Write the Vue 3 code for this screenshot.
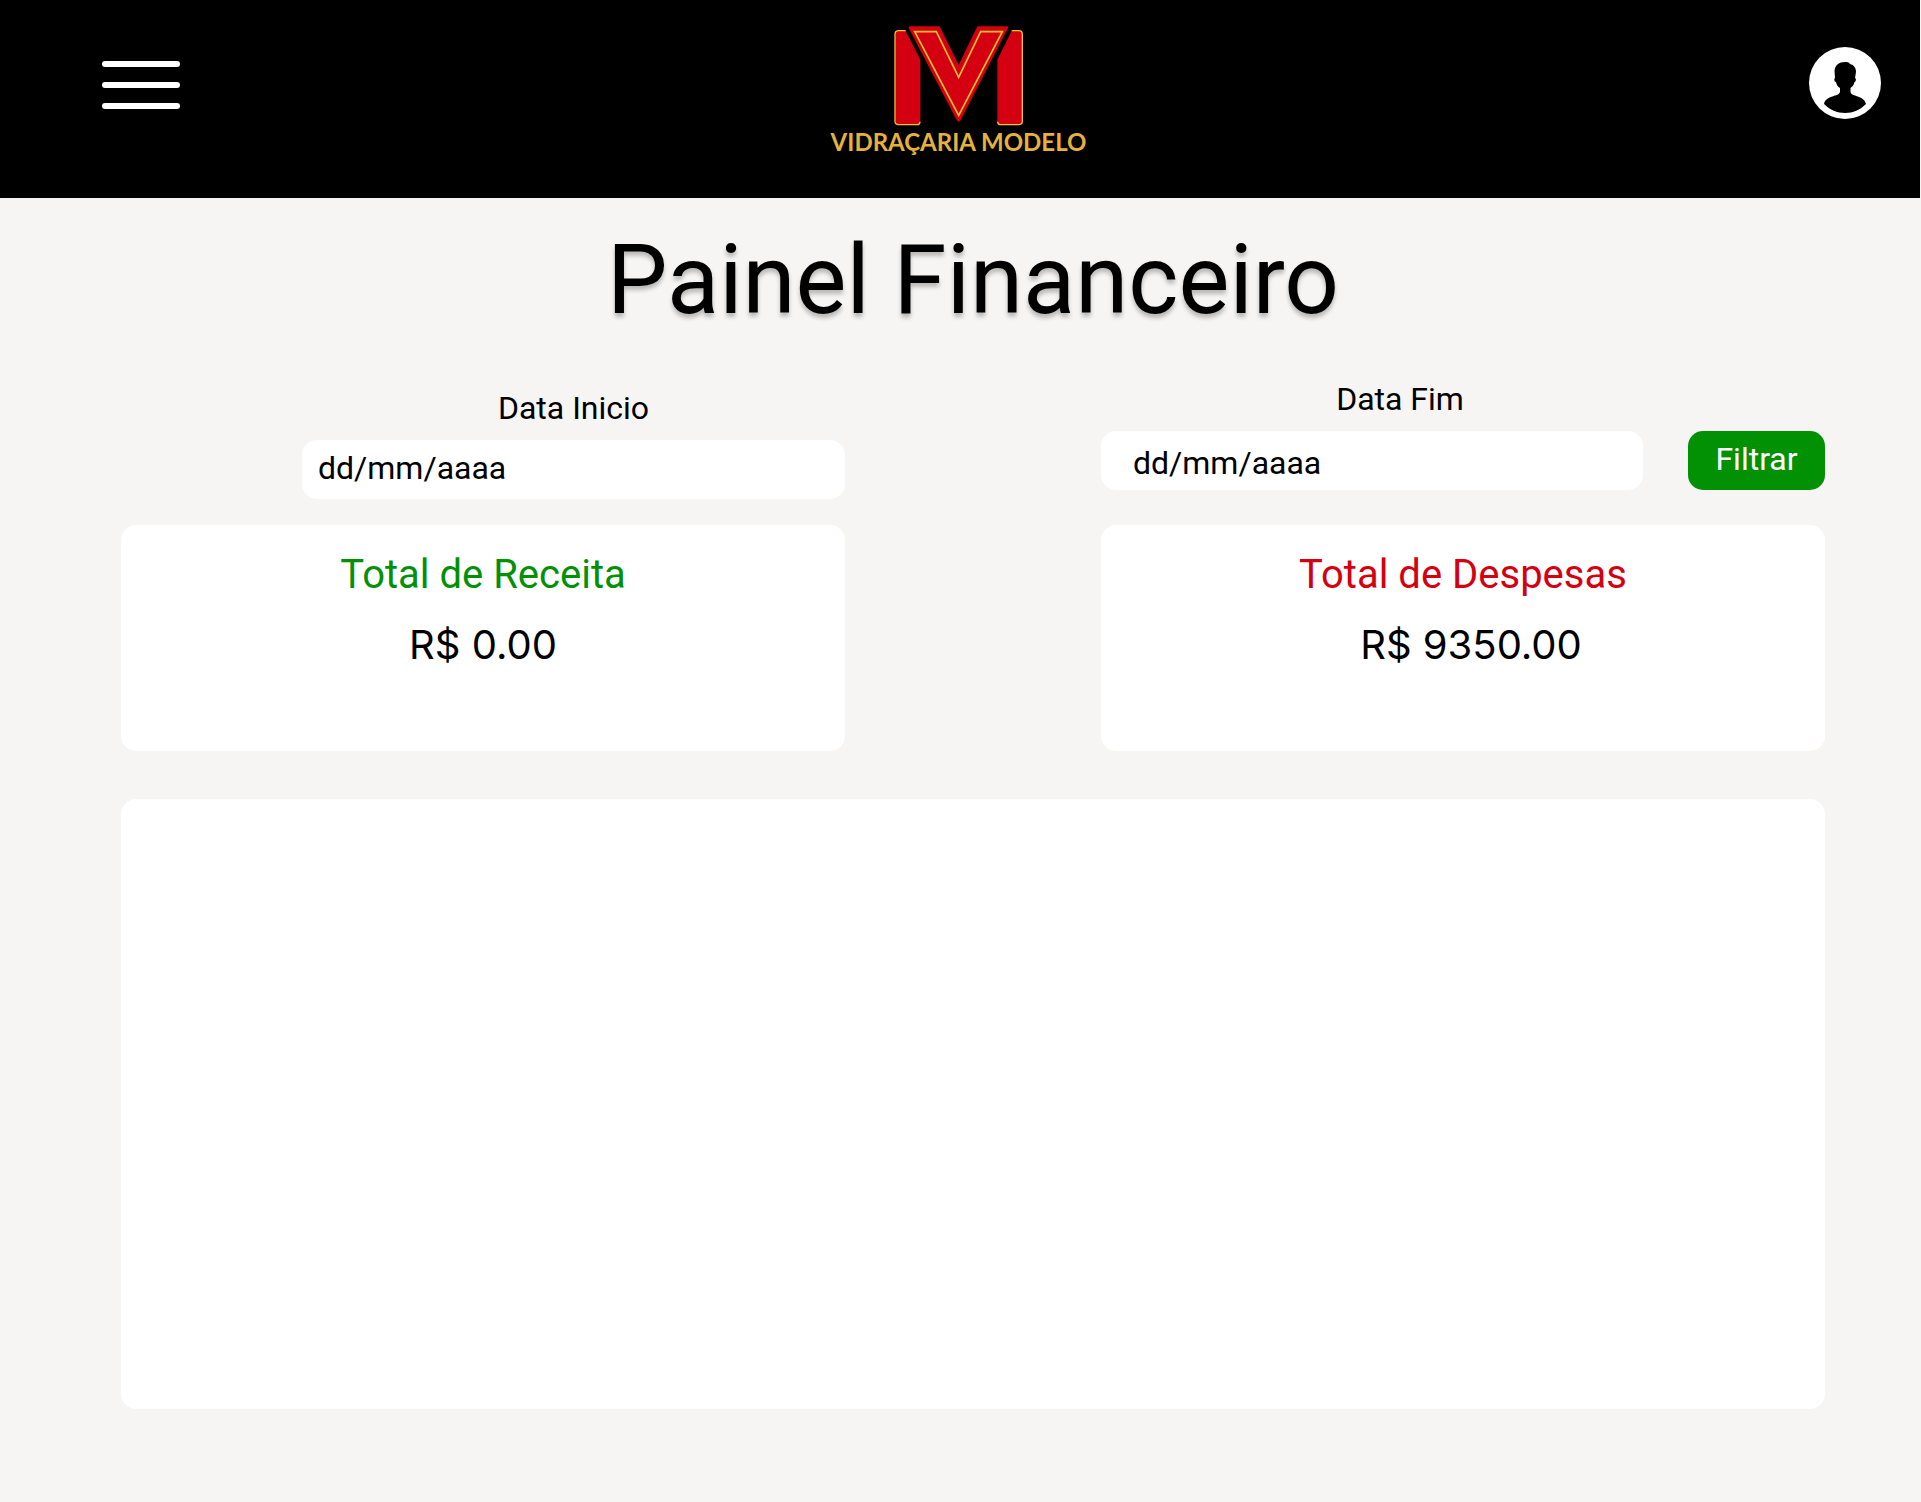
<script setup>
import { ref } from 'vue'

const startDate = ref('')
const endDate = ref('')
const income = ref(0)
const expenses = ref(9350)

const money = (value) => `R$ ${value.toFixed(2)}`
</script>

<template>
  <div class="page">
    <header class="topbar">
      <button class="menu" type="button" aria-label="Menu">
        <span class="bar"></span>
        <span class="bar"></span>
        <span class="bar"></span>
      </button>

      <a class="brand" href="#">
        <svg class="mark" viewBox="222 47 387 300" aria-hidden="true">
          <g fill="#d40011">
            <path d="M257 62H236Q226 62 226 72V332Q226 342 236 342H291Q301 342 301 332V148Z" />
            <path d="M575 62H597Q607 62 607 72V332Q607 342 597 342H542Q532 342 532 332V148Z" />
            <path d="M270 48H355Q359 48 361 52L416 164L470 52Q472 48 476 48H561Q566 48 564 53L422 329Q416 340 410 329L266 53Q264 48 270 48Z" />
          </g>
          <g fill="none" stroke="#efc12f" stroke-width="4">
            <path d="M257 61H236Q225 61 225 72V333Q225 343 236 343H291Q300 343 300 334" />
            <path d="M575 61H596Q607 61 607 72V333Q607 343 596 343H542Q533 343 533 334" />
            <path stroke-width="5" d="M284 64H349L416 201L482 64H547L416 315Z" />
          </g>
        </svg>
        <span class="name">VIDRAÇARIA MODELO</span>
      </a>

      <button class="profile" type="button" aria-label="Perfil">
        <svg viewBox="0 0 72 72" width="72" height="72" aria-hidden="true">
          <circle cx="36" cy="36" r="36" fill="#fff" />
          <path
            d="M36 15C38 15 40 15 41 17C45 18 47 21 47 25L46 31C47.500 31 47 35 45.500 35C45 38 43 40 41.500 41V45C42 50 55 48 57 57C51 63 44 66 36 66C28 66 21 63 15 57C17 48 30 50 31 45V41C29 40 27.500 38 27 35C25 35 25 31 26 31L25.500 24C26 18 30 15 36 15Z"
            fill="#000"
          />
        </svg>
      </button>
    </header>

    <main class="content">
      <h1 class="title">Painel Financeiro</h1>

      <form class="columns" @submit.prevent>
        <div class="field start">
          <label for="start-date">Data Inicio</label>
          <input id="start-date" v-model="startDate" type="text" placeholder="dd/mm/aaaa" />
        </div>
        <div class="end-group">
          <div class="field end">
            <label for="end-date">Data Fim</label>
            <input id="end-date" v-model="endDate" type="text" placeholder="dd/mm/aaaa" />
          </div>
          <button class="filter" type="submit">Filtrar</button>
        </div>
      </form>

      <section class="columns totals">
        <article class="card">
          <h2 class="income">Total de Receita</h2>
          <p>{{ money(income) }}</p>
        </article>
        <article class="card expense-card">
          <h2 class="expense">Total de Despesas</h2>
          <p>{{ money(expenses) }}</p>
        </article>
      </section>

      <section class="chart"></section>
    </main>
  </div>
</template>

<style>
body {
  background: #f6f5f4;
}
</style>

<style scoped>
.page {
  color: #000;
  font-family: Roboto, "Liberation Sans", sans-serif;
}

.topbar {
  display: grid;
  grid-template-columns: 1fr auto 1fr;
  align-items: start;
  box-sizing: border-box;
  min-height: 198px;
  margin-right: 1px;
  padding: 26px 39px 24px 102px;
  background: #000;
}

.menu,
.profile {
  padding: 0;
  border: 0;
  background: none;
  cursor: pointer;
}

.menu {
  display: flex;
  flex-direction: column;
  gap: 15px;
  width: 78px;
  margin-top: 35px;
}

.bar {
  width: 100%;
  height: 6px;
  border-radius: 3px;
  background: #fff;
}

.brand {
  display: flex;
  flex-direction: column;
  align-items: center;
  margin-right: 66px;
  color: #e5b23c;
  text-decoration: none;
}

.mark {
  width: 129px;
  height: 100px;
}

.name {
  font: 700 24px/32px Lato, sans-serif;
  white-space: nowrap;
}

.profile {
  display: flex;
  justify-self: end;
  margin-top: 21px;
}

.content {
  padding: 26px 96px 93px 121px;
}

.title {
  margin: 0 0 43px;
  font-size: 96px;
  font-weight: 400;
  line-height: 112px;
  text-align: center;
  text-shadow: 0 4px 4px rgba(0, 0, 0, 0.25);
}

.columns {
  display: grid;
  grid-template-columns: 1fr 1fr;
  column-gap: 256px;
  align-items: start;
}

.field {
  display: flex;
  flex-direction: column;
  gap: 12px;
  font-size: 32px;
  line-height: 40px;
  text-align: center;
}

.start {
  justify-self: end;
  width: 75%;
  padding-top: 9px;
}

.end-group {
  display: flex;
  align-items: flex-end;
  gap: 45px;
}

.end {
  flex: 1;
}

.end label {
  padding-left: 56px;
}

.field input {
  box-sizing: border-box;
  width: 100%;
  height: 59px;
  padding: 0 16px 4px;
  border: 0;
  border-radius: 15px;
  background: #fff;
  color: #000;
  font: inherit;
  text-align: left;
}

.end input {
  padding: 4px 32px 0;
}

.field input::placeholder {
  color: #000;
  opacity: 1;
}

.filter {
  width: 137px;
  height: 59px;
  padding: 0 0 4px;
  border: 0;
  border-radius: 15px;
  background: #029005;
  color: #fff;
  font: inherit;
  font-size: 32px;
  cursor: pointer;
}

.totals {
  margin: 26px 0 48px;
}

.card,
.chart {
  box-sizing: border-box;
  border-radius: 15px;
  background: #fff;
}

.card {
  min-height: 226px;
  padding: 26px 16px;
  text-align: center;
}

.card h2 {
  margin: 0 0 22px;
  font-size: 40px;
  font-weight: 400;
  line-height: 48px;
}

.card p {
  margin: 0;
  font-family: Inter, sans-serif;
  font-size: 40px;
  line-height: 48px;
}

.expense-card p {
  padding-left: 16px;
}

.income {
  color: #029005;
}

.expense {
  color: #d40011;
}

.chart {
  min-height: 610px;
}
</style>
